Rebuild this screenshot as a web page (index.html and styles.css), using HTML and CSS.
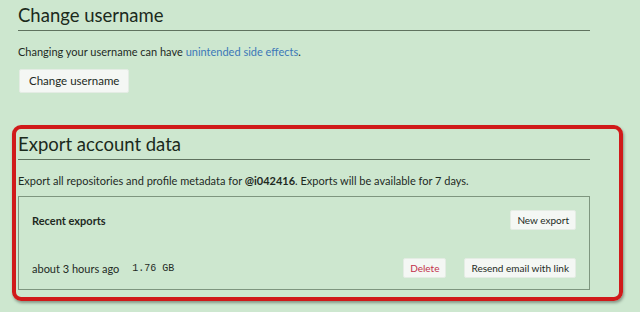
FILE: index.html
```html
<!DOCTYPE html>
<html>
<head>
<meta charset="utf-8">
<link rel="stylesheet" href="styles.css">
</head>
<body>
<div class="page">
  <section class="section">
    <h2 class="title">Change username</h2>
    <p class="desc">Changing your username can have <a class="link" href="#">unintended side effects</a>.</p>
    <button class="btn btn-lg">Change username</button>
  </section>
  <section class="section export">
    <h2 class="title">Export account data</h2>
    <p class="desc">Export all repositories and profile metadata for <strong>@i042416</strong>. Exports will be available for 7 days.</p>
    <div class="box">
      <div class="box-header">
        <span class="box-title">Recent exports</span>
        <button class="btn">New export</button>
      </div>
      <div class="box-row">
        <span class="when">about 3 hours ago</span>
        <span class="size">1.76 GB</span>
        <span class="spacer"></span>
        <button class="btn btn-danger">Delete</button>
        <button class="btn">Resend email with link</button>
      </div>
    </div>
  </section>
</div>
<div class="annotation"></div>
</body>
</html>
```
FILE: styles.css
```css
html, body {
  margin: 0;
  padding: 0;
  background: #cde7cf;
}
body {
  font-family: Lato, "Open Sans", sans-serif;
  color: #1e2a1f;
  width: 640px;
  height: 312px;
  overflow: hidden;
  position: relative;
}
.page {
  padding: 0 50px 0 18px;
}
.title {
  margin: 0;
  font-size: 18.5px;
  font-weight: 400;
  line-height: 30px;
  color: #1b2a1c;
  border-bottom: 1px solid #5f725f;
}
.desc {
  margin: 12px 0 0;
  font-size: 11px;
  line-height: 18px;
}
.desc strong { font-weight: 700; }
.link { color: #3c78b8; text-decoration: none; }
.btn {
  font-family: inherit;
  font-size: 10px;
  font-weight: 400;
  color: #222a23;
  background: #f4f7f4;
  border: 1px solid #e4ece4;
  border-radius: 2px;
  height: 20px;
  padding: 0 6px;
  line-height: 18px;
  cursor: pointer;
}
.btn-lg {
  margin: 8px 0 0 1px;
  height: 24px;
  font-size: 11.5px;
  padding: 0 9px;
}
.btn-danger { color: #c2304b; }
.export { margin-top: 36px; }
.box {
  margin-top: 6px;
  border: 1px solid #7e967f;
}
.box-header {
  display: flex;
  align-items: center;
  justify-content: space-between;
  padding: 13px 13px 13px 13px;
}
.box-title { font-size: 11px; font-weight: 700; }
.box-row {
  display: flex;
  align-items: center;
  padding: 15px 13px 11px 13px;
  font-size: 11px;
}
.size {
  margin-left: 13px;
  font-family: "Liberation Mono", monospace;
  font-size: 10px;
}
.spacer { flex: 1; }
.btn-danger { margin-right: 18px; }
.annotation {
  position: absolute;
  left: 12px;
  top: 125px;
  width: 603px;
  height: 168px;
  border: 4px solid #d01a1a;
  border-radius: 9px;
  box-shadow: 1px 2px 3px rgba(0,0,0,0.35);
  pointer-events: none;
}
```
